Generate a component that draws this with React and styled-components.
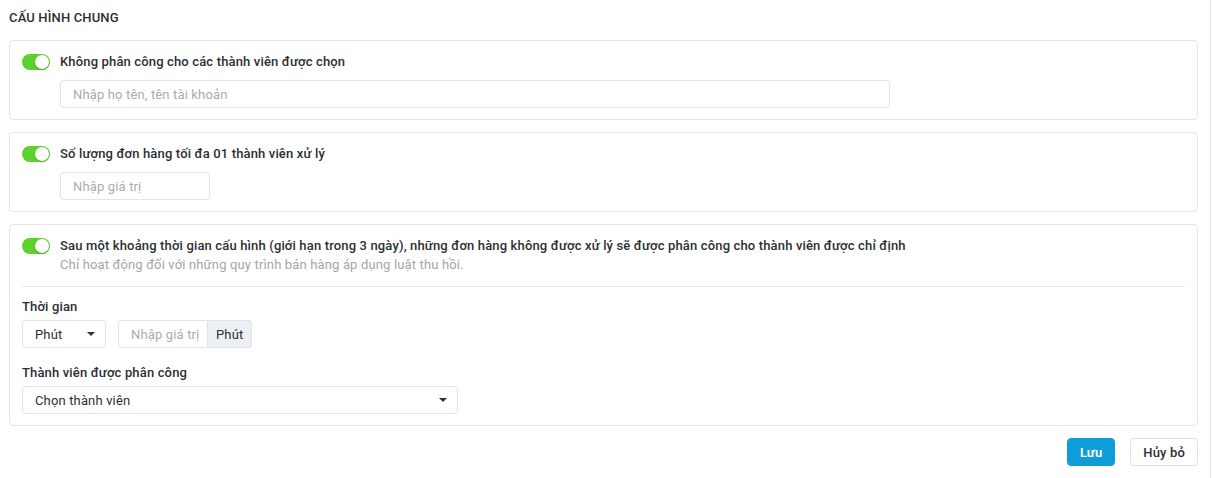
import React from 'react';
import styled, { createGlobalStyle } from 'styled-components';

const GlobalStyle = createGlobalStyle`
  body {
    margin: 0;
    background: #fff;
    font-family: Roboto, "Noto Sans", sans-serif;
    letter-spacing: 0.15px;
    color: #2b2f33;
  }
  * { box-sizing: border-box; }
`;

const Page = styled.div`
  width: 1211px;
  min-height: 478px;
  border-right: 1px solid #e6e6ec;
  padding: 8px 12px 0 9px;
`;

const Title = styled.h2`
  margin: 0 0 12px;
  font-size: 13px;
  font-weight: 500;
  line-height: 20px;
  color: #2b2f33;
`;

const Card = styled.section`
  border: 1px solid #e4e4ea;
  border-radius: 4px;
  padding: 11px 12px 11px;
  margin-bottom: 12px;
`;

const Row = styled.div`
  display: flex;
  align-items: flex-start;
  gap: 10px;
`;

const Toggle = styled.span`
  position: relative;
  flex: none;
  width: 28px;
  height: 16px;
  margin-top: 2px;
  border-radius: 8px;
  background: #5ed12b;

  &::after {
    content: '';
    position: absolute;
    top: 1px;
    right: 1px;
    width: 14px;
    height: 14px;
    border-radius: 50%;
    background: #fff;
    box-shadow: 0 1px 2px rgba(0, 0, 0, 0.25);
  }
`;

const Body = styled.div`
  display: flex;
  flex-direction: column;
  gap: 8px;
`;

const Label = styled.div`
  font-size: 13px;
  font-weight: 500;
  line-height: 20px;
  color: #2b2f33;
`;

const Hint = styled.div`
  font-size: 13px;
  line-height: 20px;
  color: #a3a6aa;
  margin-top: -9px;
`;

const Input = styled.input`
  width: ${p => p.$w}px;
  height: 28px;
  border: 1px solid #e2e3e8;
  border-radius: ${p => (p.$flat ? '4px 0 0 4px' : '4px')};
  padding: ${p => (p.$flat ? '0 2px 0 12px' : '0 12px')};
  font-family: inherit;
  font-size: 13px;
  letter-spacing: 0.15px;
  color: #2b2f33;
  outline: none;

  &::placeholder { color: #a9acb0; }
`;

const Divider = styled.hr`
  border: none;
  border-top: 1px solid #e8e8ec;
  margin: 11px 0 10px;
`;

const Field = styled.div`
  margin-top: ${p => p.$mt || 0}px;
`;

const FieldLabel = styled(Label)`
  margin-bottom: 3px;
`;

const Controls = styled.div`
  display: flex;
  gap: 12px;
`;

const Select = styled.div`
  display: flex;
  align-items: center;
  justify-content: space-between;
  width: ${p => p.$w}px;
  height: 28px;
  border: 1px solid #e2e3e8;
  border-radius: 4px;
  padding: 0 10px 0 12px;
  font-size: 13px;
  color: #2b2f33;

  &::after {
    content: '';
    border-left: 4px solid transparent;
    border-right: 4px solid transparent;
    border-top: 4px solid #2f3337;
  }
`;

const Group = styled.div`
  display: flex;
`;

const Addon = styled.span`
  display: flex;
  align-items: center;
  height: 28px;
  padding: 0 8px;
  background: #eceff3;
  border: 1px solid #e2e3e8;
  border-left: none;
  border-radius: 0 4px 4px 0;
  font-size: 13px;
  color: #2b2f33;
`;

const Actions = styled.div`
  display: flex;
  justify-content: flex-end;
  gap: 15px;
`;

const Button = styled.button`
  height: 28px;
  padding: 0 12px;
  border-radius: 4px;
  border: 1px solid ${p => (p.$primary ? '#0e9cdb' : '#dfe0e5')};
  background: ${p => (p.$primary ? '#0e9cdb' : '#fff')};
  color: ${p => (p.$primary ? '#fff' : '#2b2f33')};
  font-family: inherit;
  font-size: 13px;
  font-weight: ${p => (p.$primary ? 600 : 500)};
  letter-spacing: 0.15px;
`;

const App = () => (
  <>
    <GlobalStyle />
    <Page>
      <Title>CẤU HÌNH CHUNG</Title>

      <Card>
        <Row>
          <Toggle />
          <Body>
            <Label>Không phân công cho các thành viên được chọn</Label>
            <Input $w={830} placeholder="Nhập họ tên, tên tài khoản" />
          </Body>
        </Row>
      </Card>

      <Card>
        <Row>
          <Toggle />
          <Body>
            <Label>Số lượng đơn hàng tối đa 01 thành viên xử lý</Label>
            <Input $w={150} placeholder="Nhập giá trị" />
          </Body>
        </Row>
      </Card>

      <Card>
        <Row>
          <Toggle />
          <Body>
            <Label>Sau một khoảng thời gian cấu hình (giới hạn trong 3 ngày), những đơn hàng không được xử lý sẽ được phân công cho thành viên được chỉ định</Label>
            <Hint>Chỉ hoạt động đối với những quy trình bán hàng áp dụng luật thu hồi.</Hint>
          </Body>
        </Row>
        <Divider />
        <Field>
          <FieldLabel>Thời gian</FieldLabel>
          <Controls>
            <Select $w={84}>Phút</Select>
            <Group>
              <Input $w={90} $flat placeholder="Nhập giá trị" />
              <Addon>Phút</Addon>
            </Group>
          </Controls>
        </Field>
        <Field $mt={15}>
          <FieldLabel>Thành viên được phân công</FieldLabel>
          <Select $w={436}>Chọn thành viên</Select>
        </Field>
      </Card>

      <Actions>
        <Button $primary>Lưu</Button>
        <Button>Hủy bỏ</Button>
      </Actions>
    </Page>
  </>
);

export default App;
